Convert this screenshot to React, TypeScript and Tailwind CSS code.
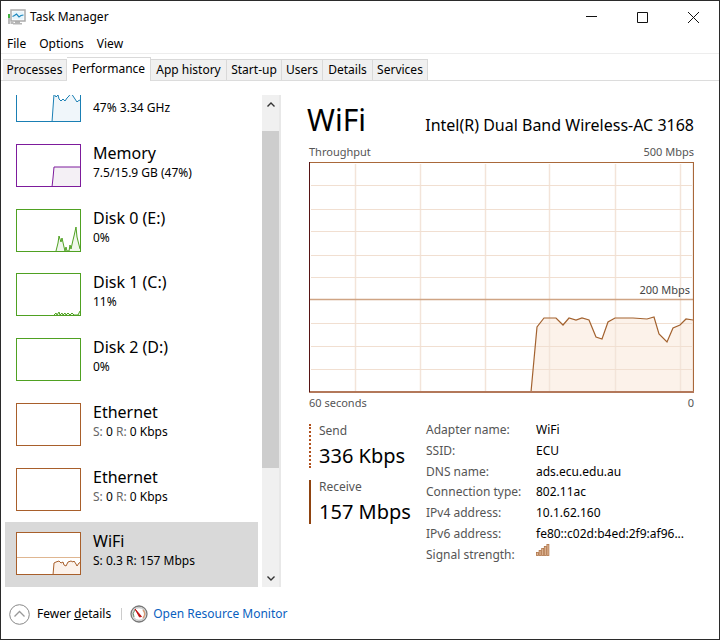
const tabs = [
  { label: "Processes", width: "w-16" },
  { label: "Performance", width: "w-[84px]" },
  { label: "App history", width: "w-[76px]" },
  { label: "Start-up", width: "w-[55px]" },
  { label: "Users", width: "w-[41px]" },
  { label: "Details", width: "w-[50px]" },
  { label: "Services", width: "w-[55px]" },
];

const blue = { stroke: "#1a7fb4", fill: "#f0f6fa" };
const purple = { stroke: "#7d1b9c", fill: "#f4f0f5" };
const green = { stroke: "#4fa122", fill: "#f0f7ec" };
const brown = { stroke: "#a85f2b", fill: "#fcf2eb" };

const devices = [
  { name: "", value: "47% 3.34 GHz", color: blue, line: "36,43 38,15 40,18 42,16 43,20 45,22 47,20 49,22 51,19 53,17 55,14 57,17 59,20 61,23 62,22 64,21" },
  { name: "Memory", value: "7.5/15.9 GB (47%)", color: purple, line: "36,43 37,34 38,23 65,23" },
  { name: "Disk 0 (E:)", value: "0%", color: green, line: "40,42 42,34 43,27 45,33 46,29 48,38 49,42 50,38 51,42 53,42 54,36 55,40 57,31 58,27 60,18 61,28 64,40" },
  { name: "Disk 1 (C:)", value: "11%", color: green, line: "38,42 40,40 41,42 43,39 44,42 46,40 47,42 49,40 50,42 52,40 54,42 56,40 58,42 62,42 64,38" },
  { name: "Disk 2 (D:)", value: "0%", color: green, line: "" },
  { name: "Ethernet", send: "0", receive: "0 Kbps", color: brown, line: "" },
  { name: "Ethernet", send: "0", receive: "0 Kbps", color: brown, line: "" },
  { name: "WiFi", send: "0.3", receive: "157 Mbps", color: brown, line: "37,43 38,31 40,30 43,29 45,31 47,30 48,33 50,34 52,30 55,29 57,30 58,29 60,32 61,34 63,31 65,30", limit: true, selected: true },
];

const details = [
  ["Adapter name:", "WiFi"],
  ["SSID:", "ECU"],
  ["DNS name:", "ads.ecu.edu.au"],
  ["Connection type:", "802.11ac"],
  ["IPv4 address:", "10.1.62.160"],
  ["IPv6 address:", "fe80::c02d:b4ed:2f9:af96..."],
];

const throughput =
  "222,230 228,165 235,156 247,156 254,163 260,156 267,158 273,156 280,158 287,175 293,177 299,160 306,156 318,156 324,156 338,157 345,155 350,172 358,180 364,166 371,163 377,157 384,158";

function AppIcon() {
  return (
    <svg className="w-[18px] h-4" viewBox="0 0 18 16">
      <path d="M1 5v10M2.500 14h3" stroke="#777" fill="none" />
      <path d="M1 5v4" stroke="#3db03d" strokeWidth="2" />
      <path d="M7 12h5v2h2v1.500H5V14h2z" fill="#b5b5b5" />
      <rect x="3" y="1" width="14" height="11" fill="#fff" stroke="#aaa" strokeWidth="1.500" />
      <rect x="4.500" y="2.500" width="11" height="8" fill="#e6f4fb" />
      <path d="M4.500 7.500l2-1 2-1.500 2.500 3 2-1.500 2.500-.5" stroke="#1b87bd" strokeWidth="1.200" fill="none" />
    </svg>
  );
}

function GaugeIcon() {
  return (
    <svg className="w-[18px] h-[18px]" viewBox="0 0 18 18">
      <circle cx="9" cy="9" r="8" fill="#eee" stroke="#777" strokeWidth="1.300" />
      <circle cx="9" cy="9" r="6.300" fill="#fff" stroke="#b9b9b9" />
      <path d="M4 12a6 6 0 0 1 1-7" stroke="#6d8f6d" fill="none" />
      <path d="M13 5a6 6 0 0 1 0 8" stroke="#d99a73" strokeWidth="1.500" fill="none" />
      <path d="M5 4l6.500 7.500-2 .5z" fill="#c00d0d" stroke="#b00" strokeWidth="0.800" />
    </svg>
  );
}

function SignalIcon() {
  return (
    <svg className="w-[14px] h-3" viewBox="0 0 14 12" role="img" aria-label="Full signal">
      {[0, 1, 2, 3, 4].map((i) => (
        <rect key={i} x={i * 2.6 + 0.5} y={8.5 - i * 2} width="2" height={3 + i * 2} fill="#dfb796" stroke="#ae7346" strokeWidth="0.800" />
      ))}
    </svg>
  );
}

function Thumbnail({ color, line, limit }: { color: typeof blue; line: string; limit?: boolean }) {
  return (
    <svg className="w-[65px] h-[43px] shrink-0" viewBox="0 0 65 43">
      <rect x="0.500" y="0.500" width="64" height="42" fill="#fff" />
      {limit && <path d="M1 25.500h63" stroke="#dfb691" />}
      {line && <polygon points={`${line} 65,43 36,43`} fill={color.fill} />}
      {line && <polyline points={line} fill="none" stroke={color.stroke} />}
      <rect x="0.500" y="0.500" width="64" height="42" fill="none" stroke={color.stroke} />
    </svg>
  );
}

function Chart() {
  return (
    <svg className="block w-full h-auto" viewBox="0 0 385 231">
      <rect width="385" height="231" fill="#fff" />
      <polygon points={`${throughput} 384,230`} fill="#fcf2ea" />
      {[46, 111, 176, 240, 306, 371].map((x) => (
        <path key={x} d={`M${x + 0.5} 2V229`} stroke="#f3e4d9" strokeWidth="1.500" />
      ))}
      {[23, 47, 69, 93, 115, 161, 184, 207].map((y) => (
        <path key={y} d={`M2 ${y + 0.5}H383`} stroke="#f1dfd1" />
      ))}
      <path d="M1 137.500H384" stroke="#cfa484" strokeWidth="1.500" />
      <polyline points={throughput} fill="none" stroke="#a3622f" strokeWidth="1.200" />
      <path d="M0 .5H384.500V231" stroke="#a9683a" strokeWidth="1.200" fill="none" />
      <path d="M0 230H385" stroke="#b3785a" strokeWidth="2" />
      <path d="M.5 0V230" stroke="#571414" />
    </svg>
  );
}

export default function App() {
  return (
    <div className="min-h-screen flex flex-col bg-white border border-[#2b2b2b] font-['Noto_Sans','Open_Sans',sans-serif] text-xs text-black">
      <header className="h-8 flex items-center pl-[7px]">
        <AppIcon />
        <h1 className="ml-1">Task Manager</h1>
        <div className="ml-auto flex">
          <button aria-label="Minimize" className="w-[51px] h-8 flex items-center justify-center">
            <svg className="w-[11px] h-[11px]" viewBox="0 0 11 11"><path d="M0 4.500h11" stroke="#111" /></svg>
          </button>
          <button aria-label="Maximize" className="w-[51px] h-8 flex items-center justify-center">
            <svg className="w-[11px] h-[11px]" viewBox="0 0 11 11"><path d="M.5.500h10v10H.5z" stroke="#111" fill="none" /></svg>
          </button>
          <button aria-label="Close" className="w-[51px] h-8 flex items-center justify-center">
            <svg className="w-[11px] h-[11px]" viewBox="0 0 11 11"><path d="M0 0l11 11M11 0L0 11" stroke="#111" /></svg>
          </button>
        </div>
      </header>

      <nav className="h-[21px] flex items-center gap-[13px] pl-1.5 pt-0.5 border-b border-[#ededed]">
        <button>File</button>
        <button>Options</button>
        <button>View</button>
      </nav>

      <div role="tablist" className="h-[27px] flex items-end pl-0.5 border-b border-[#dcdcdc]">
        {tabs.map((tab) => {
          const active = tab.label === "Performance";
          return (
            <button
              key={tab.label}
              role="tab"
              aria-selected={active}
              className={`${tab.width} border-t border-r border-[#d9d9d9] whitespace-nowrap ${
                active ? "h-6 -mb-px pb-0.5 bg-white" : "h-[21px] bg-[#f0f0f0]"
              }`}
            >
              {tab.label}
            </button>
          );
        })}
      </div>

      <main className="flex-1 flex pt-3.5">
        <aside className="h-[492px] shrink-0 flex pl-1">
          <div className="w-[253px] flex flex-col justify-end overflow-hidden">
            <ul className="h-[518px] shrink-0 grid grid-rows-8">
              {devices.map((d, i) => (
                <li key={i}>
                  <button className={`w-full h-full flex items-start gap-3 pl-[11px] pt-2.5 text-left ${d.selected ? "bg-[#d9d9d9]" : ""}`}>
                    <Thumbnail color={d.color} line={d.line} limit={d.limit} />
                    <span className="block">
                      <span className="block h-[19px] text-base leading-[19px]">{d.name}</span>
                      <span className="block leading-5">
                        {d.value ?? (
                          <>
                            <span className={d.selected ? "" : "text-[#666]"}>S:</span> {d.send}{" "}
                            <span className={d.selected ? "" : "text-[#666]"}>R:</span> {d.receive}
                          </>
                        )}
                      </span>
                    </span>
                  </button>
                </li>
              ))}
            </ul>
          </div>
          <div className="ml-1 w-[19px] flex flex-col bg-[#f0f0f0] border-r-2 border-[#e8e8e8]">
            <button aria-label="Scroll up" className="h-[18px] flex items-center justify-center">
              <svg className="w-2 h-[5px]" viewBox="0 0 8 5"><path d="M.5 4.500L4 1l3.500 3.500" stroke="#333" strokeWidth="1.400" fill="none" /></svg>
            </button>
            <div className="mt-[18px] h-[337px] bg-[#cdcdcd]" />
            <button aria-label="Scroll down" className="mt-auto h-[18px] flex items-center justify-center">
              <svg className="w-2 h-[5px]" viewBox="0 0 8 5"><path d="M.5.500L4 4 7.500.500" stroke="#333" strokeWidth="1.400" fill="none" /></svg>
            </button>
          </div>
        </aside>

        <section className="flex-1 min-w-0 pl-7 pr-[25px]">
          <div className="flex items-baseline justify-between h-12 pt-[3px]">
            <h2 className="-ml-0.5 text-3xl leading-[44px]">WiFi</h2>
            <p className="text-base">Intel(R) Dual Band Wireless-AC 3168</p>
          </div>
          <div className="flex justify-between pb-0.5 text-[11px] leading-[17px] text-[#555]">
            <span>Throughput</span>
            <span>500 Mbps</span>
          </div>
          <div className="relative">
            <Chart />
            <span className="absolute right-1 top-[120px] text-[11px] leading-4 text-[#444]">200 Mbps</span>
          </div>
          <div className="flex justify-between pt-px text-[11px] leading-[17px] text-[#555]">
            <span>60 seconds</span>
            <span>0</span>
          </div>

          <div className="flex pt-[9px]">
            <div className="w-[117px] shrink-0 flex flex-col gap-3 pt-1">
              <div className="h-11 pl-2 border-l-2 border-dotted border-[#b0501c]">
                <p className="leading-[14px] text-[#555]">Send</p>
                <p className="text-xl leading-9">336 Kbps</p>
              </div>
              <div className="h-11 pl-2 border-l-2 border-[#8f4310]">
                <p className="leading-[14px] text-[#555]">Receive</p>
                <p className="text-xl leading-9">157 Mbps</p>
              </div>
            </div>
            <table className="h-[145px] text-left">
              <tbody>
                {details.map(([label, value]) => (
                  <tr key={label}>
                    <th className="w-[110px] p-0 font-normal text-[#555]">{label}</th>
                    <td className="p-0 whitespace-nowrap">{value}</td>
                  </tr>
                ))}
                <tr>
                  <th className="w-[110px] p-0 font-normal text-[#555]">Signal strength:</th>
                  <td className="p-0 align-top"><SignalIcon /></td>
                </tr>
              </tbody>
            </table>
          </div>
        </section>
      </main>

      <footer className="h-[52px] flex items-center pl-2 pt-0.5">
        <button className="flex items-center gap-[7px]">
          <svg className="w-[21px] h-[21px]" viewBox="0 0 21 21">
            <circle cx="10.500" cy="10.500" r="9.800" fill="#fff" stroke="#888" />
            <path d="M5.500 12.500l5-5 5 5" stroke="#999" strokeWidth="1.300" fill="none" />
          </svg>
          <span>Fewer <u>d</u>etails</span>
        </button>
        <span className="ml-2.5 h-3 w-px bg-[#ccc]" />
        <a href="#resource-monitor" className="ml-2 flex items-center gap-[5px] text-[#0a5fc0]">
          <GaugeIcon />
          Open Resource Monitor
        </a>
      </footer>
    </div>
  );
}
